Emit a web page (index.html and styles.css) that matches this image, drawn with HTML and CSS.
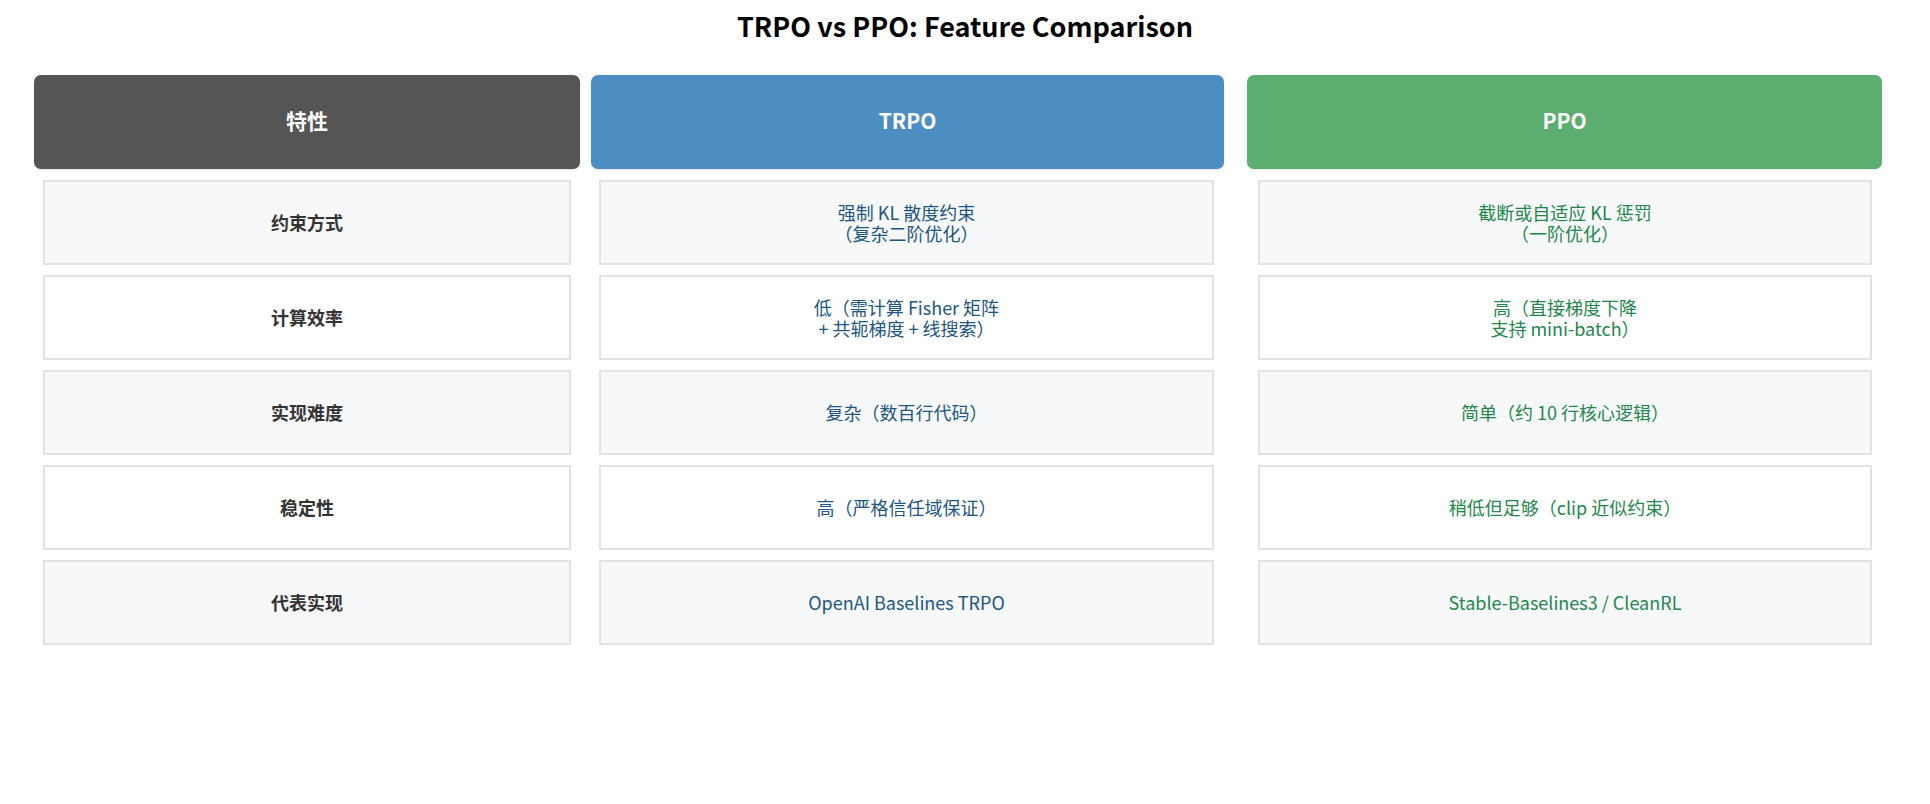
FILE: index.html
```html
<!DOCTYPE html>
<html lang="zh">
<head>
<meta charset="utf-8">
<title>TRPO vs PPO: Feature Comparison</title>
<link rel="stylesheet" href="styles.css">
</head>
<body>
<main class="page">
  <h1 class="title">TRPO vs PPO: Feature Comparison</h1>
  <div class="table">
    <div class="head head-label">特性</div>
    <div class="head head-trpo">TRPO</div>
    <div class="head head-ppo">PPO</div>

    <div class="cell label odd">约束方式</div>
    <div class="cell trpo odd">强制 KL 散度约束<br>（复杂二阶优化）</div>
    <div class="cell ppo odd">截断或自适应 KL 惩罚<br>（一阶优化）</div>

    <div class="cell label">计算效率</div>
    <div class="cell trpo">低（需计算 Fisher 矩阵<br>+ 共轭梯度 + 线搜索）</div>
    <div class="cell ppo">高（直接梯度下降<br>支持 mini-batch）</div>

    <div class="cell label odd">实现难度</div>
    <div class="cell trpo odd">复杂（数百行代码）</div>
    <div class="cell ppo odd">简单（约 10 行核心逻辑）</div>

    <div class="cell label">稳定性</div>
    <div class="cell trpo">高（严格信任域保证）</div>
    <div class="cell ppo">稍低但足够（clip 近似约束）</div>

    <div class="cell label odd">代表实现</div>
    <div class="cell trpo odd">OpenAI Baselines TRPO</div>
    <div class="cell ppo odd">Stable-Baselines3 / CleanRL</div>
  </div>
</main>
</body>
</html>
```

FILE: styles.css
```css
html, body {
  margin: 0;
  padding: 0;
  background: #ffffff;
}

body {
  font-family: "Noto Sans CJK SC", "Noto Sans", sans-serif;
  color: #333333;
}

.page {
  width: 1930px;
}

.title {
  margin: 0;
  padding-top: 8px;
  height: 75px;
  box-sizing: border-box;
  font-size: 27px;
  line-height: 36px;
  font-weight: 700;
  color: #000000;
  text-align: center;
}

.table {
  display: grid;
  grid-template-columns: 546px 633px 647px;
  grid-template-rows: 95px repeat(5, 85px);
  column-gap: 11px;
  row-gap: 10px;
  margin-left: 34px;
}

.head {
  display: flex;
  align-items: center;
  justify-content: center;
  border-radius: 7px;
  color: #ffffff;
  font-size: 21px;
  font-weight: 700;
  margin-bottom: 1px;
  padding-bottom: 4px;
  box-sizing: border-box;
  box-shadow: 0 1px 2px rgba(0, 0, 0, 0.12);
}

.head-label { background: #555555; }
.head-trpo { background: #4c8ec1; }
.head-ppo { background: #5bae6f; margin-left: 12px; }

.cell {
  display: flex;
  align-items: center;
  justify-content: center;
  text-align: center;
  background: #ffffff;
  border: 2px solid #e1e2e4;
  box-sizing: border-box;
  font-size: 18px;
  line-height: 21px;
  margin: 0 9px;
}

.cell.odd { background: #f7f8fa; }

.label {
  font-weight: 700;
  color: #333333;
}

.trpo {
  color: #1d5680;
  margin: 0 10px 0 8px;
}

.ppo {
  color: #23874c;
  margin: 0 10px 0 23px;
}
```
